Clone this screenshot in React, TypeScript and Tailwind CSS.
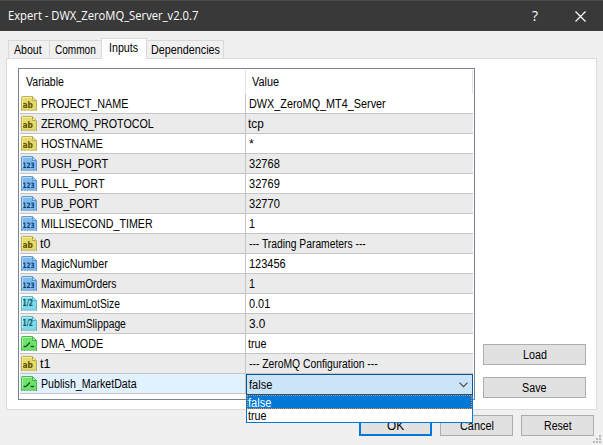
import { useLayoutEffect, useRef, useState } from "react";
import clsx from "clsx";

type Kind = "ab" | "123" | "1/2" | "bool";

/** A single line of text condensed or widened to a given advance width. */
function Fit({ w, className = "pt-[2px]", children }: { w: number; className?: string; children: string }) {
  const ref = useRef<HTMLSpanElement>(null);
  const [scale, setScale] = useState(1);
  useLayoutEffect(() => {
    const measure = () => {
      if (ref.current) setScale(w / ref.current.offsetWidth);
    };
    measure();
    document.fonts?.ready.then(measure);
  }, [w]);
  return (
    <span className={clsx("block shrink-0 whitespace-nowrap", className)} style={{ width: w }}>
      <span ref={ref} className="inline-block origin-left" style={{ transform: `scaleX(${scale})` }}>
        {children}
      </span>
    </span>
  );
}

const palettes: Record<Kind, { fill: string; light: string; edge: string; ink: string }> = {
  ab: { fill: "#e6d96b", light: "#f5efa6", edge: "#b9a948", ink: "#5a5100" },
  "123": { fill: "#80b9ec", light: "#b2d8f8", edge: "#5b92c8", ink: "#083b70" },
  "1/2": { fill: "#83d8e8", light: "#b8eff6", edge: "#58aebf", ink: "#07586b" },
  bool: { fill: "#72e06f", light: "#a8f3a4", edge: "#3fae45", ink: "#066414" },
};

const glyphs = {
  ab: { x: 1.5, y: 11.5, length: 10.5, size: 9 },
  "123": { x: 1.5, y: 11.5, length: 12, size: 7.5 },
  "1/2": { x: 1.5, y: 10, length: 10.5, size: 8.5 },
};

function TypeIcon({ kind }: { kind: Kind }) {
  const p = palettes[kind];
  const g = kind === "bool" ? null : glyphs[kind];
  return (
    <svg width="16" height="16" viewBox="0 0 16 16" className="block shrink-0 overflow-visible">
      <path
        d="M.5 1.5Q.5.5 1.5.5H11.5L15.5 4.5V15L14 13.5L12.5 15L11 13.5L9.5 15L8 13.5L6.5 15L5 13.5L3.5 15L2 13.5L.5 15Z"
        fill={p.fill}
        stroke={p.edge}
        strokeWidth=".9"
      />
      <path d="M1.5 12V1.5H11" fill="none" stroke={p.light} />
      <path d="M11.5 1V4.5H15" fill={p.light} stroke={p.edge} />
      {g ? (
        <text
          x={g.x}
          y={g.y}
          textLength={g.length}
          lengthAdjust="spacingAndGlyphs"
          fill={p.ink}
          fontFamily="'DejaVu Sans', sans-serif"
          fontWeight="bold"
          fontSize={g.size}
        >
          {kind}
        </text>
      ) : (
        <path d="M2.5 10.5H5L9 6.5M9.5 10.5H13" fill="none" stroke={p.ink} strokeWidth="1.4" />
      )}
    </svg>
  );
}

const rows: { kind: Kind; name: string; nw: number; value: string; vw: number; tight?: boolean }[] = [
  { kind: "ab", name: "PROJECT_NAME", nw: 87, value: "DWX_ZeroMQ_MT4_Server", vw: 137 },
  { kind: "ab", name: "ZEROMQ_PROTOCOL", nw: 113, value: "tcp", vw: 16, tight: true },
  { kind: "ab", name: "HOSTNAME", nw: 62, value: "*", vw: 5 },
  { kind: "123", name: "PUSH_PORT", nw: 67, value: "32768", vw: 31 },
  { kind: "123", name: "PULL_PORT", nw: 64, value: "32769", vw: 31 },
  { kind: "123", name: "PUB_PORT", nw: 58, value: "32770", vw: 31 },
  { kind: "123", name: "MILLISECOND_TIMER", nw: 112, value: "1", vw: 6 },
  { kind: "ab", name: "t0", nw: 10, value: "--- Trading Parameters ---", vw: 117 },
  { kind: "123", name: "MagicNumber", nw: 67, value: "123456", vw: 37 },
  { kind: "123", name: "MaximumOrders", nw: 75, value: "1", vw: 6 },
  { kind: "1/2", name: "MaximumLotSize", nw: 79, value: "0.01", vw: 21 },
  { kind: "1/2", name: "MaximumSlippage", nw: 85, value: "3.0", vw: 16 },
  { kind: "bool", name: "DMA_MODE", nw: 62, value: "true", vw: 19, tight: true },
  { kind: "ab", name: "t1", nw: 10, value: "--- ZeroMQ Configuration ---", vw: 129 },
  { kind: "bool", name: "Publish_MarketData", nw: 96, value: "", vw: 0 },
];

function Button({ label, w, className }: { label: string; w: number; className: string }) {
  return (
    <button className={clsx("flex h-[21px] shrink-0 items-center justify-center bg-[#e1e1e1]", className)}>
      <Fit w={w}>{label}</Fit>
    </button>
  );
}

function Tab({ label, w, className }: { label: string; w: number; className: string }) {
  return (
    <div className={clsx("flex shrink-0 items-center border-t border-[#d9d9d9]", className)}>
      <Fit w={w}>{label}</Fit>
    </div>
  );
}

function ValueCombo() {
  return (
    <div className="absolute left-[227px] top-[305px] z-10 w-[227px]">
      <div className="flex h-[21px] items-center justify-between border border-[#005499] bg-[#cce4f7] pr-[4px] pl-[2px]">
        <Fit w={23}>false</Fit>
        <svg width="9" height="6" viewBox="0 0 9 6" fill="none" stroke="#454545" strokeWidth="1.1">
          <path d="M.5.7L4.5 4.7L8.5.7" />
        </svg>
      </div>
      <div className="border border-t-0 border-[#0078d7] bg-white">
        <div className="flex h-[14px] items-center bg-[#0078d7] pl-px text-white outline-1 -outline-offset-1 outline-dotted outline-[#ff8728]">
          <Fit w={23}>false</Fit>
        </div>
        <div className="flex h-[13px] items-center pl-px">
          <Fit w={19}>true</Fit>
        </div>
      </div>
    </div>
  );
}

export default function App() {
  return (
    <div className="flex h-[445px] w-[603px] flex-col overflow-hidden bg-[#f0f0f0] font-['Liberation_Sans',sans-serif] text-[12.5px] leading-[13px] text-black">
      <header className="flex h-[31px] shrink-0 items-center border-t border-[#4b4b4b] bg-[#393939] pl-2 text-white">
        <Fit w={190} className="font-['Open_Sans',sans-serif] text-[12px] leading-4">
          Expert - DWX_ZeroMQ_Server_v2.0.7
        </Fit>
        <span className="ml-[334px] w-[7px] pb-[2px] font-['Open_Sans',sans-serif] text-[14px]">?</span>
        <svg className="ml-[36px]" width="11" height="11" viewBox="0 0 11 11" stroke="white" strokeWidth="1.2">
          <path d="M.5.5L10.5 10.5M10.5.5L.5 10.5" />
        </svg>
      </header>

      <nav className="relative z-10 mt-[7px] -mb-px flex h-[21px] shrink-0 items-end pl-2">
        <Tab label="About" w={28} className="mb-px h-[18px] w-[42px] border-r border-l pl-[5px]" />
        <Tab label="Common" w={41} className="mb-px h-[18px] w-[51px] pl-[5px]" />
        <Tab label="Inputs" w={29} className="h-[21px] w-[46px] border-r border-l bg-white pb-[3px] pl-[7px]" />
        <Tab label="Dependencies" w={69} className="mb-px h-[18px] w-[77px] border-r pl-[4px]" />
      </nav>

      <main className="ml-[6px] flex h-[352px] w-[591px] shrink-0 border border-[#dadada] bg-white pt-[9px] pl-[11px]">
        <section className="relative h-[332px] w-[457px] shrink-0 border border-[#7b8290] bg-white">
          <div className="flex h-[25px] pt-px pl-px">
            <div className="flex w-[226px] items-center border-r border-[#e3e3e3] pl-[6px]">
              <Fit w={38} className="pt-0">
                Variable
              </Fit>
            </div>
            <div className="flex w-[227px] items-center border-r border-[#e3e3e3] pl-[6px]">
              <Fit w={27} className="pt-0">
                Value
              </Fit>
            </div>
          </div>
          <div className="ml-px w-[453px]">
            {rows.map((row, i) => (
              <div
                key={row.name}
                className={clsx(
                  "flex h-[20px] border-b border-[#c5c5c5]",
                  i === 14 ? "bg-[#e1f1ff]" : i % 2 ? "bg-[#ebebeb]" : "bg-white",
                )}
              >
                <div className="flex w-[226px] items-center border-r border-[#c5c5c5] pl-px">
                  <TypeIcon kind={row.kind} />
                  <Fit w={row.nw} className={row.name.length === 2 ? "ml-[3px] pt-[2px]" : "ml-[4px] pt-[2px]"}>
                    {row.name}
                  </Fit>
                </div>
                <div className={clsx("flex items-center", row.tight ? "pl-[2px]" : "pl-[3px]")}>
                  {row.value && <Fit w={row.vw}>{row.value}</Fit>}
                </div>
              </div>
            ))}
          </div>
          <ValueCombo />
        </section>
        <aside className="ml-[8px] flex flex-col gap-[12px] pt-[276px]">
          <Button label="Load" w={24} className="w-[103px] border border-[#adadad]" />
          <Button label="Save" w={25} className="w-[103px] border border-[#adadad]" />
        </aside>
      </main>

      <footer className="flex h-[35px] items-start pt-[5px] pl-[359px]">
        <Button label="OK" w={17} className="w-[73px] border-2 border-[#0078d7]" />
        <Button label="Cancel" w={34} className="ml-[8px] w-[73px] border border-[#adadad]" />
        <Button label="Reset" w={28} className="ml-[8px] w-[73px] border border-[#adadad]" />
        <svg width="8" height="8" viewBox="0 0 8 8" fill="#b8b8b8" className="-ml-px mt-[20px] shrink-0">
          <path d="M6 0h2v2H6zM3 3h2v2H3zM6 3h2v2H6zM0 6h2v2H0zM3 6h2v2H3zM6 6h2v2H6z" />
        </svg>
      </footer>
    </div>
  );
}
